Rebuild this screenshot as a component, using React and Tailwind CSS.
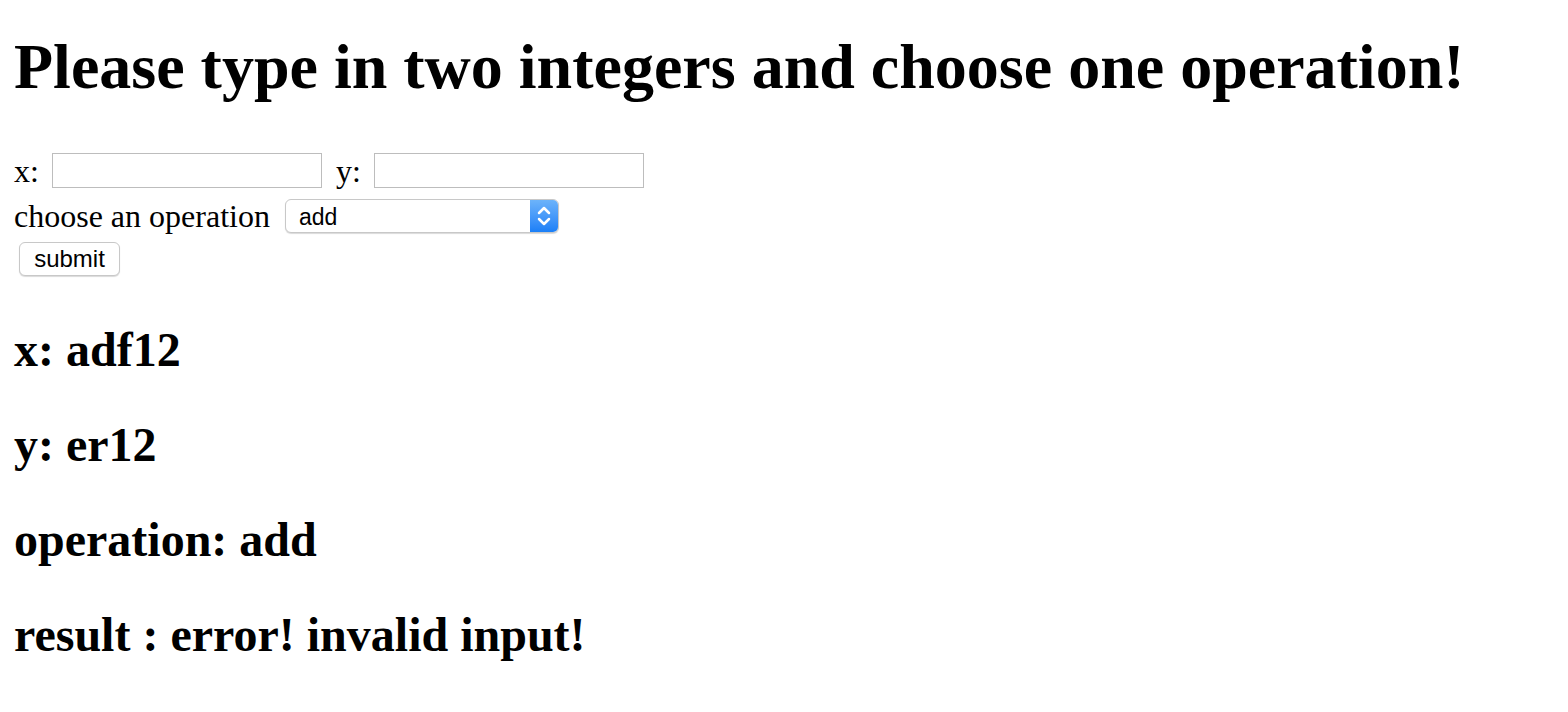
import React, { useState } from 'react';

const serif = "font-['Liberation_Serif','Times_New_Roman',serif]";
const sans = "font-['Liberation_Sans',Helvetica,Arial,sans-serif]";

const App = () => {
  const [x, setX] = useState('');
  const [y, setY] = useState('');
  const [op, setOp] = useState('add');

  const results = [
    'x: adf12',
    'y: er12',
    'operation: add',
    'result : error! invalid input!',
  ];

  return (
    <div className={`min-h-[712px] bg-white pl-[14px] pt-[30px] text-black ${serif}`}>
      <h1 className="text-[64px] font-bold leading-[74px]">
        Please type in two integers and choose one operation!
      </h1>

      {/* Form */}
      <form className="mt-[49px] text-[32px]" onSubmit={(e) => e.preventDefault()}>
        <div className="flex h-[35px] items-center">
          <span className="leading-none">x:</span>
          <input
            type="text"
            value={x}
            onChange={(e) => setX(e.target.value)}
            className="ml-[13px] h-[35px] w-[270px] border border-[#bdbdbd] bg-white px-1 outline-none"
          />
          <span className="ml-[14px] leading-none">y:</span>
          <input
            type="text"
            value={y}
            onChange={(e) => setY(e.target.value)}
            className="ml-[13px] h-[35px] w-[270px] border border-[#bdbdbd] bg-white px-1 outline-none"
          />
        </div>

        <div className="mt-[11px] flex h-[34px] items-center">
          <span className="leading-none">choose an operation</span>
          <div className="relative ml-[15px] flex h-[34px] w-[274px] items-center overflow-hidden rounded-[6px] border border-[#c8c8c8] bg-white shadow-[0_1px_1px_rgba(0,0,0,0.15)]">
            <select
              value={op}
              onChange={(e) => setOp(e.target.value)}
              className={`h-full w-full appearance-none bg-transparent pl-[13px] pr-[30px] text-[23px] outline-none ${sans}`}
            >
              <option value="add">add</option>
              <option value="subtract">subtract</option>
              <option value="multiply">multiply</option>
              <option value="divide">divide</option>
            </select>
            <div className="pointer-events-none absolute right-0 top-0 flex h-full w-[28px] items-center justify-center bg-gradient-to-b from-[#6cb3fa] to-[#1a7ff7]">
              <svg width="16" height="26" viewBox="0 0 16 26" fill="none" stroke="white" strokeWidth="2.5" strokeLinecap="round" strokeLinejoin="round">
                <path d="M3 10l5-5 5 5" />
                <path d="M3 16l5 5 5-5" />
              </svg>
            </div>
          </div>
        </div>

        <div className="mt-[9px] flex">
          <button
            type="submit"
            className={`ml-[5px] h-[34px] w-[101px] rounded-[6px] border border-[#c8c8c8] bg-white text-[24px] leading-none shadow-[0_1px_1px_rgba(0,0,0,0.15)] ${sans}`}
          >
            submit
          </button>
        </div>
      </form>

      {/* Results */}
      <div className="mt-[46px] flex flex-col gap-[40px]">
        {results.map((r) => (
          <h2 key={r} className="text-[48px] font-bold leading-[55px]">
            {r}
          </h2>
        ))}
      </div>
    </div>
  );
};

export default App;
